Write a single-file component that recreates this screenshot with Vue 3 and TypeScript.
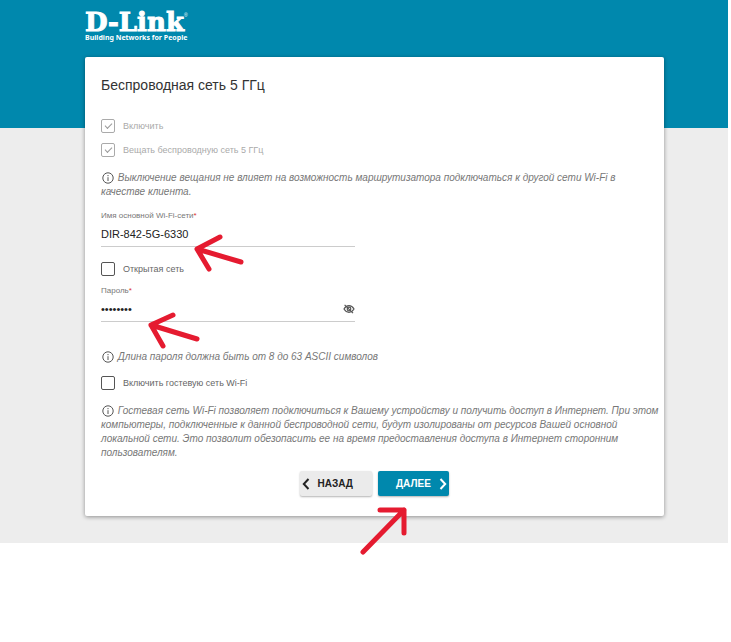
<script setup lang="ts">
import { ref } from 'vue'

const enabled = ref(true)
const broadcast = ref(true)
const openNetwork = ref(false)
const guestNetwork = ref(false)
const ssid = ref('DIR-842-5G-6330')
const password = ref('12345678')
const showPassword = ref(false)
</script>

<template>
  <div class="page">
    <div class="shell">
      <header class="brand">
        <div class="brand-name">D-Link<sup>®</sup></div>
        <div class="brand-tagline">Building Networks for People</div>
      </header>

      <main class="card">
        <h1>Беспроводная сеть 5 ГГц</h1>

        <form @submit.prevent>
          <label class="check first">
            <input v-model="enabled" type="checkbox" disabled />
            <span>Включить</span>
          </label>
          <label class="check second">
            <input v-model="broadcast" type="checkbox" disabled />
            <span>Вещать беспроводную сеть 5 ГГц</span>
          </label>

          <p class="note">
            <svg class="info" viewBox="0 0 12 12" aria-hidden="true">
              <circle cx="6" cy="6" r="5.2" />
              <path d="M6 5.2V9M6 3V4.2" />
            </svg>
            Выключение вещания не влияет на возможность маршрутизатора подключаться к другой сети Wi-Fi в качестве клиента.
          </p>

          <div class="field name-field">
            <label for="ssid">Имя основной Wi-Fi-сети<i>*</i></label>
            <div class="control"><input id="ssid" v-model="ssid" type="text" /></div>
          </div>

          <label class="check">
            <input v-model="openNetwork" type="checkbox" />
            <span>Открытая сеть</span>
          </label>

          <div class="field password-field">
            <label for="password">Пароль<i>*</i></label>
            <div class="control">
              <input id="password" v-model="password" :type="showPassword ? 'text' : 'password'" />
              <button class="eye" type="button" aria-label="Показать пароль" @click="showPassword = !showPassword">
                <svg viewBox="0 0 12 10" aria-hidden="true">
                  <path d="M1 5C2.4 2.6 4 1.7 6 1.7S9.6 2.6 11 5C9.6 7.4 8 8.3 6 8.3S2.4 7.4 1 5Z" />
                  <circle cx="6" cy="5" r="1.8" />
                  <path d="M1.6 .8L10 9.2" />
                </svg>
              </button>
            </div>
          </div>

          <p class="note">
            <svg class="info" viewBox="0 0 12 12" aria-hidden="true">
              <circle cx="6" cy="6" r="5.2" />
              <path d="M6 5.2V9M6 3V4.2" />
            </svg>
            Длина пароля должна быть от 8 до 63 ASCII символов
          </p>

          <label class="check guest">
            <input v-model="guestNetwork" type="checkbox" />
            <span>Включить гостевую сеть Wi-Fi</span>
          </label>

          <p class="note">
            <svg class="info" viewBox="0 0 12 12" aria-hidden="true">
              <circle cx="6" cy="6" r="5.2" />
              <path d="M6 5.2V9M6 3V4.2" />
            </svg>
            Гостевая сеть Wi-Fi позволяет подключиться к Вашему устройству и получить доступ в Интернет. При этом компьютеры, подключенные к данной беспроводной сети, будут изолированы от ресурсов Вашей основной локальной сети. Это позволит обезопасить ее на время предоставления доступа в Интернет сторонним пользователям.
          </p>

          <div class="actions">
            <button class="back" type="button">
              <svg viewBox="0 0 8 12" aria-hidden="true"><path d="M6.5 1L1.8 6L6.5 11" /></svg>
              <span>НАЗАД</span>
            </button>
            <button class="next" type="submit">
              <span>ДАЛЕЕ</span>
              <svg viewBox="0 0 8 12" aria-hidden="true"><path d="M1.5 1L6.2 6L1.5 11" /></svg>
            </button>
          </div>
        </form>
      </main>
    </div>

    <svg class="arrows" width="728" height="600" viewBox="0 0 728 600" aria-hidden="true">
      <path d="M241 262L197 249M220 237L197 249L209 269" />
      <path d="M197 339L151 325M173 315L151 325L163 346" />
      <path d="M363 552L404 510M380 510H404V533" />
    </svg>
  </div>
</template>

<style>
body {
  background: #fff;
}
</style>

<style scoped>
.page {
  position: relative;
  min-height: 100vh;
  background: #fff;
}

.shell {
  margin-right: 3px;
  padding: 10px 64px 27px 85px;
  background: linear-gradient(#0088ad 128px, #ededed 128px);
  font-family: "Liberation Sans", Arial, sans-serif;
  color: #333;
}

.brand {
  height: 47px;
  color: #fff;
}

.brand-name {
  font: bold 26px/24px "DejaVu Serif", serif;
  -webkit-text-stroke: 1px #fff;
}

.brand-name sup {
  font: 5px/5px "Liberation Sans", sans-serif;
  vertical-align: 14px;
  -webkit-text-stroke: 0;
}

.brand-tagline {
  font: bold 7px/7px "Noto Sans", sans-serif;
  white-space: nowrap;
}

.card {
  padding: 18px 16px 20px;
  background: #fff;
  border-radius: 2px;
  box-shadow: 0 1px 4px rgba(0, 0, 0, 0.4);
}

h1 {
  margin: 0 0 24px;
  font-size: 14px;
  line-height: 20px;
  font-weight: 400;
}

.check {
  display: flex;
  align-items: center;
  gap: 8px;
  width: fit-content;
  height: 14px;
  font-size: 9px;
  color: #666;
}

.first {
  margin-bottom: 10px;
  color: #aaa;
}

.second {
  margin-bottom: 14px;
  color: #aaa;
}

.check input {
  appearance: none;
  box-sizing: border-box;
  width: 14px;
  height: 14px;
  margin: 0;
  border: 1px solid #555;
  border-radius: 2px;
  display: grid;
  place-items: center;
}

.check input:disabled {
  border-color: #aaa;
}

.check input:checked::before {
  content: "";
  box-sizing: border-box;
  width: 7px;
  height: 4px;
  margin-bottom: 2px;
  border: solid #999;
  border-width: 0 0 1px 1px;
  transform: rotate(-45deg);
}

.note {
  margin: 0 -12px 0 0;
  font-size: 10px;
  line-height: 14px;
  font-style: italic;
  color: #777;
}

.info {
  width: 12px;
  height: 12px;
  margin: 0 1px;
  vertical-align: -3px;
  fill: none;
  stroke: #555;
  stroke-width: 1;
}

.field {
  width: 254px;
}

.field label {
  display: block;
  font-size: 8px;
  line-height: 10px;
  color: #777;
}

.field i {
  color: #d33;
  font-style: normal;
}

.control {
  display: flex;
  align-items: center;
  height: 25px;
  border-bottom: 1px solid #ccc;
}

.control input {
  flex: 1;
  min-width: 0;
  padding: 0;
  border: 0;
  outline: 0;
  background: none;
  font: 11px/16px "Liberation Sans", Arial, sans-serif;
  color: #222;
}

.name-field {
  margin: 12px 0 15px;
}

.password-field {
  margin: 10px 0 28px;
}

.eye {
  display: flex;
  padding: 0;
  border: 0;
  background: none;
}

.eye svg {
  width: 12px;
  height: 10px;
  fill: none;
  stroke: #555;
  stroke-width: 1.2;
}

.guest {
  margin: 12px 0 14px;
}

.actions {
  display: flex;
  justify-content: center;
  gap: 6px;
  margin-top: 11px;
}

.actions button {
  display: flex;
  align-items: center;
  justify-content: space-between;
  height: 25px;
  padding: 0 2px;
  border: 0;
  border-radius: 2px;
  font: bold 10px/12px "Liberation Sans", Arial, sans-serif;
  box-shadow: 0 1px 2px rgba(0, 0, 0, 0.3);
}

.actions svg {
  width: 8px;
  height: 12px;
  fill: none;
  stroke: currentColor;
  stroke-width: 2;
}

.actions .back {
  width: 72px;
  padding-right: 19px;
  background: #ebebeb;
  color: #222;
}

.actions .next {
  width: 71px;
  padding-left: 18px;
  background: #0088ad;
  color: #fff;
}

.arrows {
  position: absolute;
  top: 0;
  left: 0;
  pointer-events: none;
  fill: none;
  stroke: #e51b30;
  stroke-width: 5;
  stroke-linecap: round;
  stroke-linejoin: round;
}
</style>
